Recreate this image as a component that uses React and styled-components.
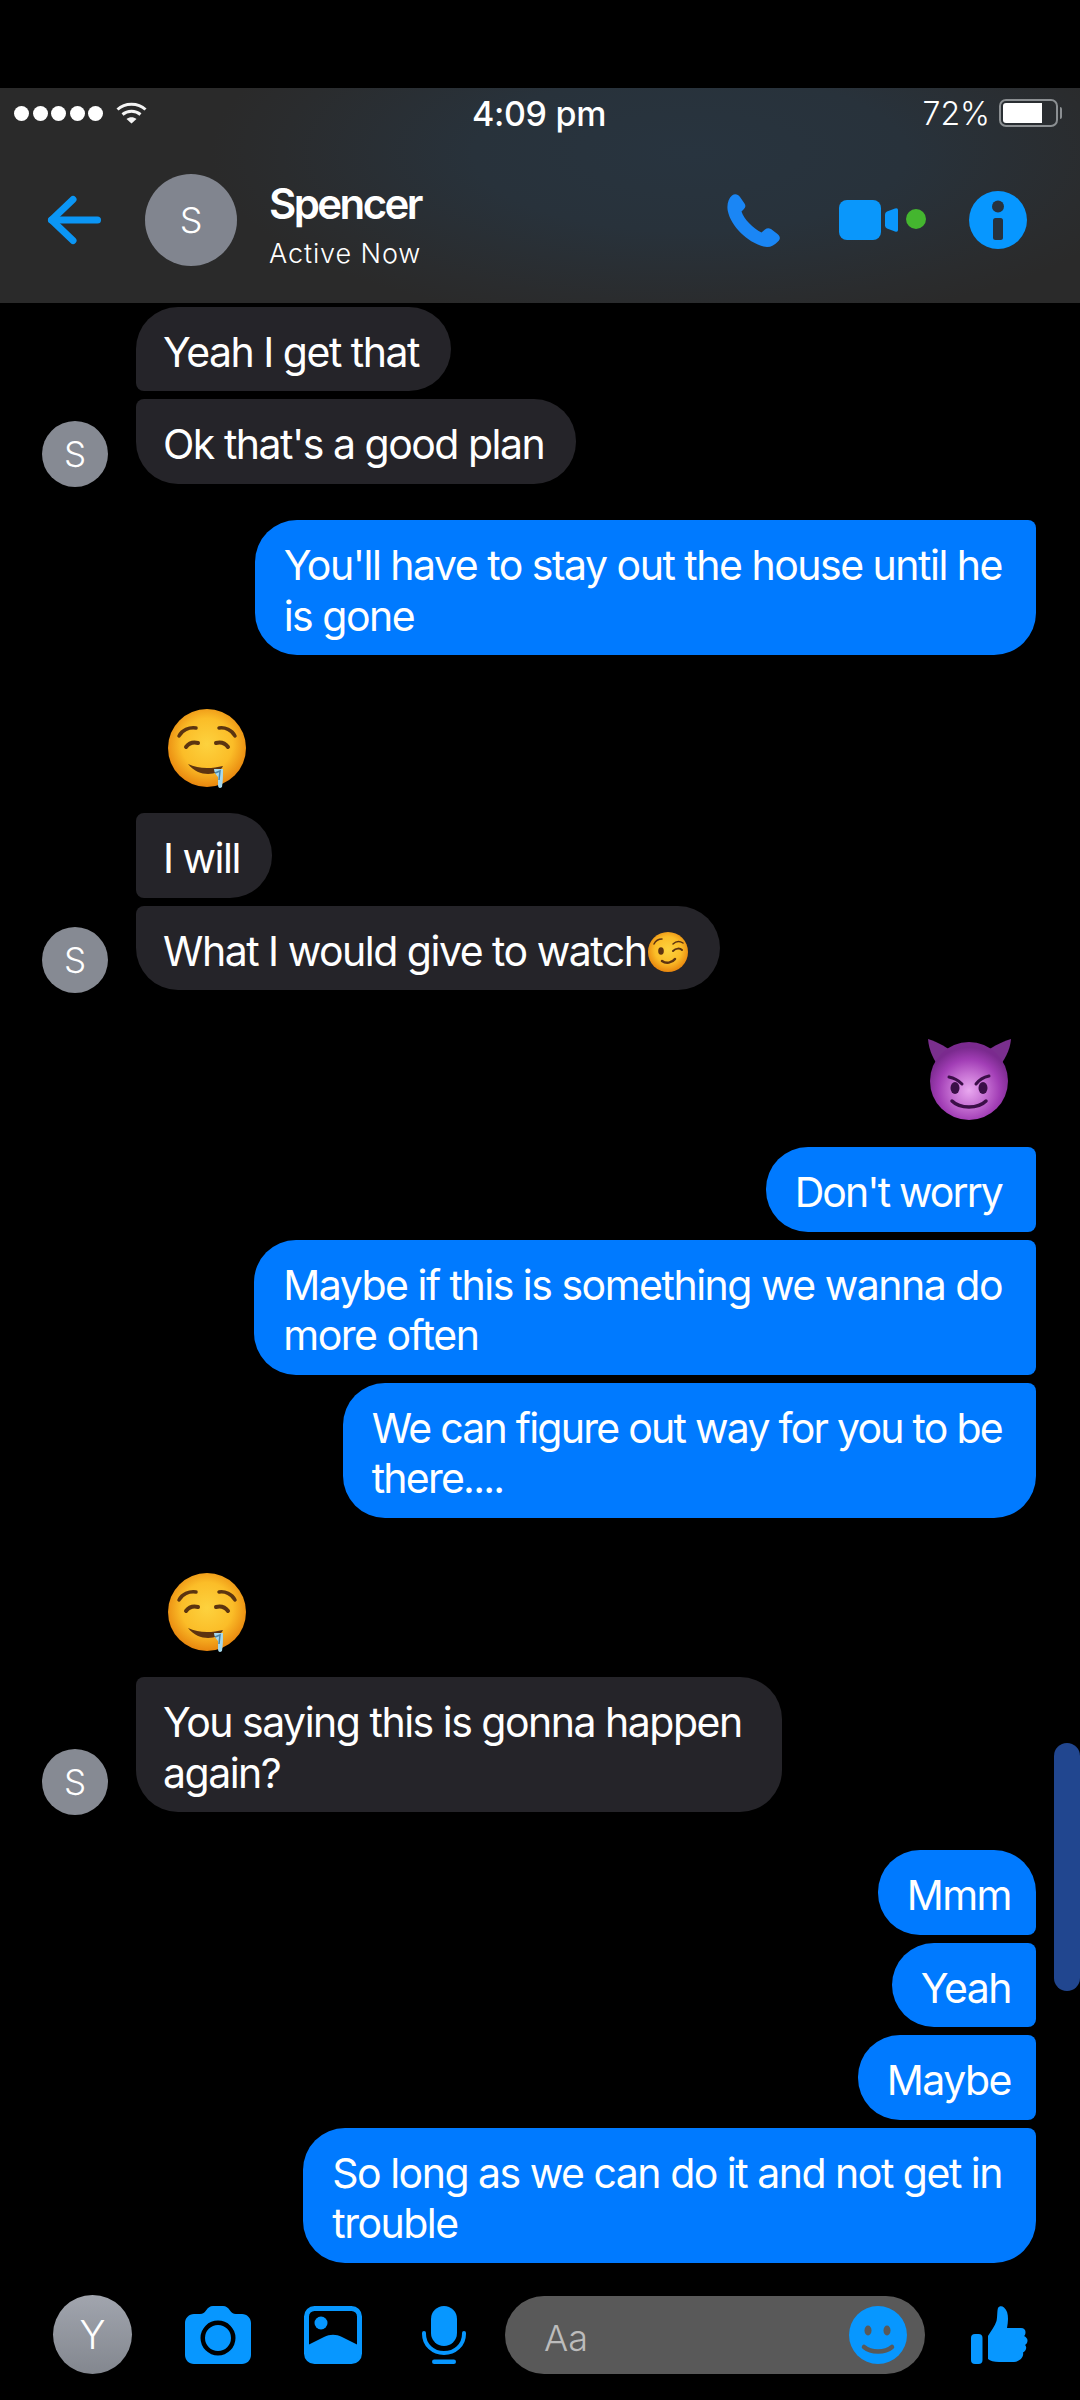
import styled, { createGlobalStyle } from "styled-components";

const GlobalStyle = createGlobalStyle`
    html, body {
        margin: 0;
        padding: 0;
        background: #000;
    }
    * {
        box-sizing: border-box;
    }
`;

export default function App() {
    return (
        <>
            <GlobalStyle />
            <Page>
                <Header>
                    <StatusBar>
                        <StatusLeft>
                            <SignalDots>
                                <SignalDot /><SignalDot /><SignalDot /><SignalDot /><SignalDot />
                            </SignalDots>
                            <WifiIcon />
                        </StatusLeft>
                        <StatusTime>4:09 pm</StatusTime>
                        <StatusRight>
                            <BatteryText>72%</BatteryText>
                            <Battery><BatteryFill /></Battery>
                            <BatteryTip />
                        </StatusRight>
                    </StatusBar>
                    <NavBar>
                        <BackIcon />
                        <HeaderAvatar>S</HeaderAvatar>
                        <Contact>
                            <ContactName>Spencer</ContactName>
                            <ContactStatus>Active Now</ContactStatus>
                        </Contact>
                        <NavActions>
                            <PhoneIcon />
                            <VideoIcon />
                            <InfoIcon />
                        </NavActions>
                    </NavBar>
                </Header>

                <Messages>
                    <Scrollbar />

                    <IncomingGroup $top={3.5}>
                        <SmallAvatar>S</SmallAvatar>
                        <Stack>
                            <Bubble $corners="tl-big bl-small">Yeah I get that</Bubble>
                            <Bubble $corners="tl-small bl-big">Ok that's a good plan</Bubble>
                        </Stack>
                    </IncomingGroup>

                    <OutgoingGroup $top={36.5}>
                        <Bubble $mine $corners="tr-small br-big">
                            You'll have to stay out the house until he<br />is gone
                        </Bubble>
                    </OutgoingGroup>

                    <IncomingGroup $top={54}>
                        <SmallAvatar>S</SmallAvatar>
                        <Stack>
                            <EmojiIncoming><DroolEmoji id="droolOne" /></EmojiIncoming>
                            <Bubble $corners="tl-small bl-small">I will</Bubble>
                            <Bubble $corners="tl-small bl-big">
                                What I would give to watch<WinkEmoji />
                            </Bubble>
                        </Stack>
                    </IncomingGroup>

                    <OutgoingGroup $top={49}>
                        <EmojiOutgoing><DevilEmoji /></EmojiOutgoing>
                        <Bubble $mine $tracking={-1.9} $corners="tr-small br-small">Don't worry</Bubble>
                        <Bubble $mine $corners="tr-small br-small">
                            Maybe if this is something we wanna do<br />more often
                        </Bubble>
                        <Bubble $mine $tracking={-1.75} $corners="tr-small br-big">
                            We can figure out way for you to be<br />there....
                        </Bubble>
                    </OutgoingGroup>

                    <IncomingGroup $top={55.5}>
                        <SmallAvatar>S</SmallAvatar>
                        <Stack>
                            <EmojiIncoming><DroolEmoji id="droolTwo" /></EmojiIncoming>
                            <Bubble $pad={40} $corners="tl-small bl-big">
                                You saying this is gonna happen<br />again?
                            </Bubble>
                        </Stack>
                    </IncomingGroup>

                    <OutgoingGroup $top={38}>
                        <Bubble $mine $pad={25} $corners="tr-big br-small">Mmm</Bubble>
                        <Bubble $mine $pad={25} $corners="tr-small br-small">Yeah</Bubble>
                        <Bubble $mine $pad={25} $corners="tr-small br-small">Maybe</Bubble>
                        <Bubble $mine $corners="tr-small br-big">
                            So long as we can do it and not get in<br />trouble
                        </Bubble>
                    </OutgoingGroup>
                </Messages>

                <Footer>
                    <FooterAvatar>Y</FooterAvatar>
                    <CameraIcon />
                    <ImageIcon />
                    <MicIcon />
                    <InputPill>
                        <Placeholder>Aa</Placeholder>
                        <SmileIcon />
                    </InputPill>
                    <ThumbIcon />
                </Footer>
            </Page>
        </>
    )
};


function WifiIcon() {
    return (
        <WifiSvg viewBox="0 0 31 22" fill="none" stroke="#f4f4f4" strokeWidth="3">
            <path d="M1.5 7.5C9 .5 22 .5 29.5 7.5" />
            <path d="M6.5 12.5C11.5 8.3 19.5 8.3 24.5 12.5" />
            <path d="M10.5 17L15.5 21.5L20.5 17C17.5 14.6 13.5 14.6 10.5 17Z" fill="#f4f4f4" stroke="none" />
        </WifiSvg>
    );
}

function BackIcon() {
    return (
        <NavSvg $w={53} $h={48} viewBox="0 0 53 48" fill="none" stroke="#0b96f5" strokeWidth="7" strokeLinecap="round" strokeLinejoin="round">
            <path d="M25 3.500L3.500 24L25 44.500" />
            <path d="M3.500 24H49.500" />
        </NavSvg>
    );
}

function PhoneIcon() {
    return (
        <NavSvg $w={53} $h={53} viewBox="0 0 53 53">
            <path
                fill="#1a86f5"
                d="M5 1.500C8-.8 11 .3 13 3L17.500 9.500C19 12 18.500 13.500 16.500 15.500L14.500 17.500C17 25 26 34.500 34.500 38.500L38 35.500C40 33.800 41.800 33.800 44 35L50.500 40C53.500 42.500 53.500 45 51 47.500C47 52 42 54 36.500 52.500C20 48 4 32 .8 17C-.5 10.500 1.500 4.500 5 1.500Z"
            />
        </NavSvg>
    );
}

function VideoIcon() {
    return (
        <NavSvg $w={87} $h={40} viewBox="0 0 87 40">
            <rect x="0" y="0" width="42" height="40" rx="8" fill="#0a97fb" />
            <path d="M46 14.500Q46 12.500 48 11.500L56 8.500Q59 7.500 59 10V30Q59 32.500 56 31.500L48 28.500Q46 27.500 46 25.500Z" fill="#0a97fb" />
            <circle cx="77" cy="19" r="10" fill="#44b62f" />
        </NavSvg>
    );
}

function InfoIcon() {
    return (
        <NavSvg $w={58} $h={58} viewBox="0 0 58 58">
            <circle cx="29" cy="29" r="29" fill="#0797ff" />
            <circle cx="29" cy="15.500" r="6" fill="#27323d" />
            <rect x="24" y="27" width="10" height="22" rx="2.500" fill="#27323d" />
        </NavSvg>
    );
}

function CameraIcon() {
    return (
        <IconSvg $w={66} viewBox="0 0 66 58">
            <path
                fill="#0797ff"
                fillRule="evenodd"
                d="M9 8H15C18 8 19.500 6.500 21 4.500C23 1.500 25 0 28 0H38C41 0 43 1.500 45 4.500C46.500 6.500 48 8 51 8H57C62 8 66 12 66 17V49C66 54 62 58 57 58H9C4 58 0 54 0 49V17C0 12 4 8 9 8ZM33 14.500A17.500 17.500 0 1 0 33 49.500A17.500 17.500 0 1 0 33 14.500ZM33 19A13 13 0 1 1 33 45A13 13 0 1 1 33 19Z"
            />
        </IconSvg>
    );
}

function ImageIcon() {
    return (
        <IconSvg $w={58} $left={53} viewBox="0 0 58 58">
            <rect x="2.500" y="2.500" width="53" height="53" rx="8" fill="none" stroke="#0797ff" strokeWidth="5" />
            <circle cx="17" cy="17" r="6.500" fill="#0797ff" />
            <path fill="#0797ff" d="M4 39L20 31C26 28 32 28 38 31L54 39V50C54 53 52 55 49 55H9C6 55 4 53 4 50Z" />
        </IconSvg>
    );
}

function MicIcon() {
    return (
        <IconSvg $w={44} $left={60} viewBox="0 0 44 58">
            <rect x="9" y="0" width="26" height="40" rx="13" fill="#0797ff" />
            <path d="M2 27V28C2 39 11 47 22 47C33 47 42 39 42 28V27" fill="none" stroke="#0797ff" strokeWidth="4" strokeLinecap="round" />
            <rect x="10" y="53.500" width="24" height="4.500" rx="2.200" fill="#0797ff" />
        </IconSvg>
    );
}

function SmileIcon() {
    return (
        <IconSvg $w={58} viewBox="0 0 58 58">
            <circle cx="29" cy="29" r="29" fill="#0797ff" />
            <ellipse cx="19" cy="24.500" rx="3.500" ry="5" fill="#595959" />
            <ellipse cx="38" cy="24.500" rx="3.500" ry="5" fill="#595959" />
            <path d="M15 41C22 47 36 47 43 41" fill="none" stroke="#595959" strokeWidth="4.500" strokeLinecap="round" />
        </IconSvg>
    );
}

function ThumbIcon() {
    return (
        <IconSvg $w={57} $left={1} viewBox="0 0 57 58">
            <rect x="0" y="28" width="11.500" height="30" rx="4" fill="#0797ff" />
            <path
                fill="#0797ff"
                d="M17 30C20 25 24 20 25.500 15C26.500 11 26 5 27 2C28 0 31 -.5 33 1.500C36 4 37 8 37 13C37 16 36.500 19 36 22H50C53 22 54.500 24 54.500 26C54.500 28 54 29.500 53 30C55 31 56.500 32.500 56.500 34.500C56.500 36.500 55.500 38 54 39C55 40 55.500 41.500 55 43C54.500 45 53 46 52 46.500C52.500 48 52 50.500 51 51.500C49.500 54 46 56 43 56H28C23 56 19 55 17 53Z"
            />
        </IconSvg>
    );
}

function DroolEmoji({ id }) {
    return (
        <FaceSvg $w={80} $h={80} viewBox="0 0 80 80">
            <defs>
                <radialGradient id={id} cx="50%" cy="45%" r="55%">
                    <stop offset="0%" stopColor="#fdd23e" />
                    <stop offset="60%" stopColor="#fbbd28" />
                    <stop offset="100%" stopColor="#e8860e" />
                </radialGradient>
            </defs>
            <circle cx="40" cy="39" r="39" fill={`url(#${id})`} />
            <g fill="none" stroke="#5b3410" strokeLinecap="round">
                <path d="M12 27C15 21 22 18 29 19" strokeWidth="3.500" />
                <path d="M68 27C65 21 58 18 52 19" strokeWidth="3.500" />
                <path d="M19 38C22 34 27 33 31 34" strokeWidth="4" />
                <path d="M61 38C58 34 53 33 49 34" strokeWidth="4" />
            </g>
            <path d="M21 55C31 60 44 60 56 57C52 67 32 69 21 55Z" fill="#5d3310" />
            <path d="M47 60H56C56 68 56 72 55 78C53 80 51 79 51 76V68C49 66 47 63 47 60Z" fill="#a5d9ee" />
            <path d="M48 64L53 62L52 71" fill="none" stroke="#4b84a5" strokeWidth="1.500" />
        </FaceSvg>
    );
}

function WinkEmoji() {
    return (
        <InlineFace viewBox="0 0 40 40">
            <defs>
                <radialGradient id="winkFace" cx="50%" cy="45%" r="55%">
                    <stop offset="0%" stopColor="#fdd23e" />
                    <stop offset="60%" stopColor="#fbbd28" />
                    <stop offset="100%" stopColor="#e8860e" />
                </radialGradient>
            </defs>
            <circle cx="20" cy="20" r="20" fill="url(#winkFace)" />
            <ellipse cx="13" cy="19" rx="2.800" ry="3.800" fill="#5d3310" />
            <g fill="none" stroke="#5d3310" strokeLinecap="round">
                <path d="M6 12C8 8 11 7 14 7" strokeWidth="1.500" />
                <path d="M25 12C28 9 32 9 35 11" strokeWidth="1.500" />
                <path d="M25 19C28 16 32 16 34 18" strokeWidth="2" />
                <path d="M14 29C18 32 24 31 27 27" strokeWidth="2.500" />
            </g>
        </InlineFace>
    );
}

function DevilEmoji() {
    return (
        <FaceSvg $w={86} $h={81} viewBox="0 0 86 81">
            <defs>
                <radialGradient id="devilFace" cx="50%" cy="62%" r="55%">
                    <stop offset="0%" stopColor="#e9a8f0" />
                    <stop offset="40%" stopColor="#c56fd2" />
                    <stop offset="72%" stopColor="#a13db5" />
                    <stop offset="100%" stopColor="#7a2a8e" />
                </radialGradient>
            </defs>
            <path d="M2 0C12 3 22 9 28 14L15 30C8 22 3 12 2 0Z" fill="#7a2f8e" />
            <path d="M85 0C75 3 64 9 58 14L71 30C78 22 84 12 85 0Z" fill="#7a2f8e" />
            <circle cx="43" cy="42" r="39" fill="url(#devilFace)" />
            <g fill="#3a0f47">
                <ellipse cx="29" cy="49" rx="4.500" ry="6" />
                <ellipse cx="57" cy="49" rx="4.500" ry="6" />
            </g>
            <g fill="none" stroke="#3a0f47" strokeLinecap="round">
                <path d="M23 38C28 39 33 42 36 45" strokeWidth="3" />
                <path d="M63 37C58 38 53 41 50 45" strokeWidth="3" />
                <path d="M26 62C34 70 52 70 60 62" strokeWidth="3.500" />
            </g>
        </FaceSvg>
    );
}


const Page = styled.div`
    width: 1080px;
    height: 2400px;
    padding-top: 88px;
    background: #000;
    color: #fff;
    font-family: Inter, "Liberation Sans", sans-serif;
    overflow: hidden;
    display: flex;
    flex-direction: column;
`;

const Header = styled.header`
    height: 215px;
    flex-shrink: 0;
    background: radial-gradient(ellipse 480px 175px at 690px 65px, #28343f 0%, #28323b 45%, #2a2c2e 85%, #2a2a2a 100%), #2a2a2a;
`;

const StatusBar = styled.div`
    display: grid;
    grid-template-columns: 1fr auto 1fr;
    align-items: center;
    height: 50px;
    padding: 0 18px 0 14px;
`;

const StatusLeft = styled.div`
    display: flex;
    align-items: center;
    gap: 13px;
`;

const SignalDots = styled.div`
    display: flex;
    gap: 3.500px;
`;

const SignalDot = styled.span`
    width: 15px;
    height: 15px;
    border-radius: 50%;
    background: #fff;
`;

const WifiSvg = styled.svg`
    width: 31px;
    height: 22px;
`;

const StatusTime = styled.div`
    font-size: 34px;
    font-weight: 500;
    letter-spacing: -0.3px;
    padding-left: 2px;
`;

const StatusRight = styled.div`
    display: flex;
    align-items: center;
    justify-content: flex-end;
`;

const BatteryText = styled.span`
    font-size: 32px;
    font-weight: 300;
    margin-right: 9px;
`;

const Battery = styled.div`
    width: 59px;
    height: 28px;
    border: 2px solid #8b8f92;
    border-radius: 7px;
    padding: 2px;
`;

const BatteryFill = styled.div`
    width: 39px;
    height: 100%;
    background: #fff;
    border-radius: 3px 0 0 3px;
`;

const BatteryTip = styled.div`
    width: 2px;
    height: 12px;
    margin-left: 2px;
    background: #8b8f92;
    border-radius: 0 2px 2px 0;
`;

const NavBar = styled.div`
    display: flex;
    align-items: center;
    height: 165px;
    padding: 0 53px 1px 48px;
`;

const NavSvg = styled.svg`
    width: ${(props) => props.$w}px;
    height: ${(props) => props.$h}px;
    overflow: visible;
    flex-shrink: 0;
`;

const HeaderAvatar = styled.div`
    width: 92px;
    height: 92px;
    margin-left: 44px;
    border-radius: 50%;
    background: #81858f;
    display: flex;
    align-items: center;
    justify-content: center;
    font-size: 36px;
    font-weight: 300;
`;

const Contact = styled.div`
    display: flex;
    flex-direction: column;
    margin-left: 32px;
    padding-top: 10px;
`;

const ContactName = styled.div`
    font-size: 42px;
    line-height: 50px;
    font-weight: 600;
    letter-spacing: -2.6px;
`;

const ContactStatus = styled.div`
    font-size: 27px;
    line-height: 36px;
    margin-top: 7px;
    font-weight: 300;
    letter-spacing: 0.9px;
`;

const NavActions = styled.div`
    display: flex;
    align-items: center;
    margin-left: auto;
    gap: 59px;

    & > svg:last-child {
        margin-left: -16px;
    }
`;

const Messages = styled.main`
    position: relative;
    height: 1992px;
    flex-shrink: 0;
    display: flex;
    flex-direction: column;
`;

const Scrollbar = styled.div`
    position: absolute;
    top: 1440px;
    right: 0;
    width: 26px;
    height: 248px;
    border-radius: 13px;
    background: #21468f;
`;

const IncomingGroup = styled.section`
    display: flex;
    align-items: flex-end;
    padding-left: 42px;
    margin-top: ${(props) => props.$top}px;
`;

const OutgoingGroup = styled.section`
    display: flex;
    flex-direction: column;
    align-items: flex-end;
    gap: 8px;
    padding-right: 44px;
    margin-top: ${(props) => props.$top}px;
`;

const Stack = styled.div`
    display: flex;
    flex-direction: column;
    align-items: flex-start;
    gap: 8px;
`;

const SmallAvatar = styled.div`
    width: 66px;
    height: 66px;
    margin: 0 28px -3px 0;
    flex-shrink: 0;
    border-radius: 50%;
    background: #868a93;
    display: flex;
    align-items: center;
    justify-content: center;
    font-size: 35px;
    font-weight: 300;
`;

const cornerRadius = (corners, name) => {
    if (corners.includes(`${name}-small`)) return "8px";
    return "42px";
};

const Bubble = styled.div`
    padding: 20px ${(props) => props.$pad || (props.$mine ? 34 : 32)}px 14px ${(props) => (props.$mine ? "29px" : "27px")};
    font-size: 41px;
    line-height: 50.500px;
    font-weight: 400;
    letter-spacing: ${(props) => props.$tracking || -1.5}px;
    white-space: nowrap;
    color: #fff;
    background: ${(props) => (props.$mine ? "#007aff" : "#252429")};
    border-top-left-radius: ${(props) => (props.$mine ? "42px" : cornerRadius(props.$corners, "tl"))};
    border-bottom-left-radius: ${(props) => (props.$mine ? "42px" : cornerRadius(props.$corners, "bl"))};
    border-top-right-radius: ${(props) => (props.$mine ? cornerRadius(props.$corners, "tr") : "42px")};
    border-bottom-right-radius: ${(props) => (props.$mine ? cornerRadius(props.$corners, "br") : "42px")};
`;

const EmojiIncoming = styled.div`
    display: flex;
    margin: 0 0 16px 31px;
`;

const EmojiOutgoing = styled.div`
    display: flex;
    margin-bottom: 19px;
    margin-right: 24px;
`;

const FaceSvg = styled.svg`
    width: ${(props) => props.$w}px;
    height: ${(props) => props.$h}px;
`;

const InlineFace = styled.svg`
    width: 40px;
    height: 40px;
    vertical-align: -6px;
    margin-left: 1px;
`;

const Footer = styled.footer`
    display: flex;
    align-items: center;
    height: 79px;
    padding-left: 53px;
`;

const FooterAvatar = styled.div`
    width: 79px;
    height: 79px;
    margin-right: 53px;
    border-radius: 50%;
    background: linear-gradient(#a1a5ae, #83878f);
    display: flex;
    align-items: center;
    justify-content: center;
    font-size: 39px;
    font-weight: 300;
`;

const IconSvg = styled.svg`
    width: ${(props) => props.$w}px;
    height: 58px;
    flex-shrink: 0;
    overflow: visible;
    margin-left: ${(props) => props.$left || 0}px;
`;

const InputPill = styled.div`
    width: 420px;
    height: 78px;
    margin-left: 39px;
    margin-right: 45px;
    padding: 0 18px 0 39px;
    border-radius: 39px;
    background: #595959;
    display: flex;
    align-items: center;
    justify-content: space-between;
    flex-shrink: 0;
`;

const Placeholder = styled.span`
    font-size: 36px;
    font-weight: 300;
    color: #bcbcbc;
    padding-top: 6px;
`;
